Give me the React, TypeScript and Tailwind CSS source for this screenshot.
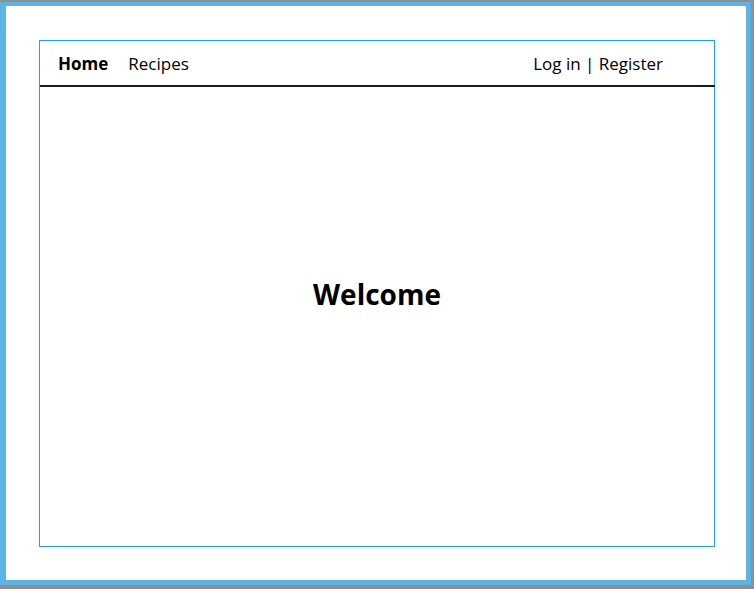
import React from "react";

export default function App() {
  return (
    <div className="w-[754px] h-[589px] bg-[#8c8f93] pt-[2px] font-['Open_Sans',sans-serif] text-black">
      <div className="w-[751px] h-[583px] border-[5px] border-l-[6px] border-t-[4px] border-[#5eb3e5] bg-white pl-[33px] pt-[34px]">
        <div className="w-[676px] h-[507px] border border-[#1da1ff] flex flex-col">
          <nav className="h-[46px] shrink-0 flex items-center justify-between pt-[2px] pl-[18px] pr-[52px] border-b-2 border-[#1a1a1a] mr-[-1px] text-[17px]">
            <div className="flex items-center gap-[20px]">
              <span className="font-bold">Home</span>
              <span>Recipes</span>
            </div>
            <div>Log in | Register</div>
          </nav>
          <main className="flex-1 flex items-center justify-center pb-[46px]">
            <h1 className="text-[28px] font-bold">Welcome</h1>
          </main>
        </div>
      </div>
    </div>
  );
}
